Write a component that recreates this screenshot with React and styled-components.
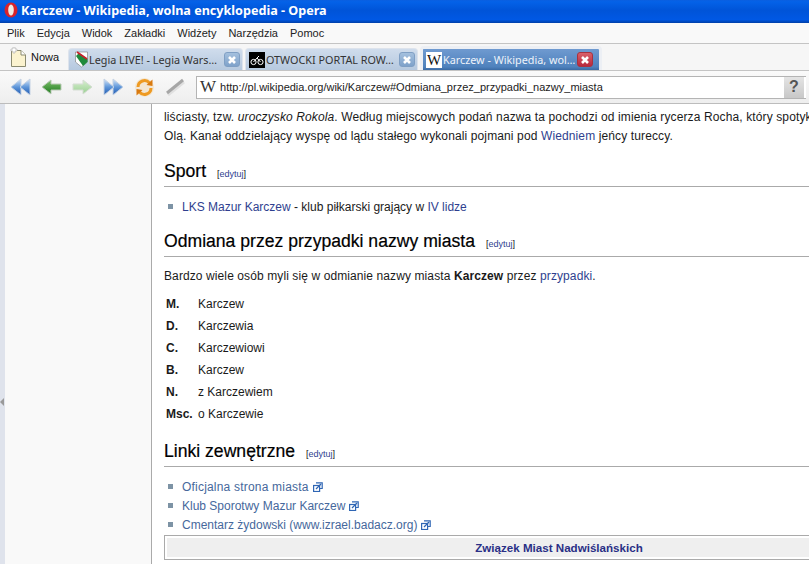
import React from 'react';
import styled, { createGlobalStyle } from 'styled-components';

const Global = createGlobalStyle`
  html, body { margin: 0; padding: 0; background: #fff; }
  * { box-sizing: border-box; }
`;

const Window = styled.div`
  width: 809px;
  height: 564px;
  overflow: hidden;
  display: flex;
  flex-direction: column;
  font-family: "Liberation Sans", Arial, sans-serif;
`;

const TitleBar = styled.div`
  height: 23px;
  flex: none;
  display: flex;
  align-items: center;
  gap: 3px;
  padding: 0 0 3px 4px;
  color: #fff;
  font: bold 12.6px "Noto Sans", sans-serif;
  background: linear-gradient(#0a5fe0 0, #0462e8 8%, #0054d8 45%, #0058e4 85%, #003fa8 100%);
`;

const MenuBar = styled.div`
  height: 21px;
  flex: none;
  display: flex;
  align-items: center;
  gap: 12px;
  padding-left: 7px;
  font: 11px "Liberation Sans", sans-serif;
  color: #222;
  background: #f9f9f9;
  border-bottom: 1px solid #c4c4c4;
`;

const TabStrip = styled.div`
  height: 27px;
  flex: none;
  display: flex;
  align-items: flex-end;
  background: #f6f6f6;
  border-bottom: 1px solid #c4c4c4;
`;

const NewTab = styled.div`
  width: 68px;
  height: 100%;
  display: flex;
  align-items: center;
  gap: 4px;
  padding-left: 10px;
  font: 11px "Liberation Sans", sans-serif;
  color: #111;
`;

const Tab = styled.div`
  width: ${p => p.$width}px;
  height: ${p => (p.$active ? 24 : 22)}px;
  margin-right: 2px;
  display: flex;
  align-items: center;
  gap: 1px;
  padding: 0 ${p => (p.$active ? 6 : 2)}px 0 3px;
  border: ${p => (p.$active ? '3px solid #eceff4' : '1px solid #dde3ec')};
  border-bottom: none;
  border-radius: 4px 4px 0 0;
  font: 10.8px "Noto Sans", sans-serif;
  white-space: nowrap;
  overflow: hidden;
  color: ${p => (p.$active ? '#eef3fa' : '#333')};
  background: ${p => (p.$active
    ? 'linear-gradient(#6f9ad0, #4f82bd 85%, #3a6aa4)'
    : 'linear-gradient(#cfdcec, #b6c9df)')};
`;

const TabLabel = styled.span`
  flex: 1;
  overflow: hidden;
`;

const CloseBox = styled.div`
  width: 16px;
  height: 15px;
  flex: none;
  display: flex;
  align-items: center;
  justify-content: center;
  border-radius: 3px;
  background: ${p => (p.$active
    ? 'linear-gradient(#d8606a, #b8283c)'
    : 'linear-gradient(#a4c0de, #7fa2ca)')};
  border: 1px solid ${p => (p.$active ? '#a83240' : '#7f9fc4')};
`;

const Toolbar = styled.div`
  height: 33px;
  flex: none;
  display: flex;
  align-items: center;
  padding: 0 3px 0 10px;
  background: linear-gradient(#fafafa, #eeeeee);
  border-bottom: 1px solid #bcbcbc;
`;

const NavIcons = styled.div`
  width: 186px;
  flex: none;
  display: flex;
  align-items: center;
  gap: 10px;
`;

const Address = styled.div`
  flex: 1;
  height: 23px;
  display: flex;
  align-items: center;
  gap: 4px;
  padding-left: 3px;
  background: #fff;
  border: 1px solid #b4b4b4;
  border-right: none;
  font: 11px "Liberation Sans", sans-serif;
  color: #222;
  white-space: nowrap;
`;

const AddressText = styled.span`
  flex: 1;
`;

const SiteGlyph = styled.span`
  font: 17px "Liberation Serif", serif;
  color: #333;
`;

const Help = styled.div`
  width: 20px;
  height: 21px;
  margin-right: 2px;
  display: flex;
  align-items: center;
  justify-content: center;
  background: linear-gradient(#e4e4e4, #c8c8c8);
  color: #555;
  font: bold 16px "Liberation Sans", sans-serif;
`;

const Body = styled.div`
  flex: 1;
  min-height: 0;
  display: flex;
`;

const Edge = styled.div`
  width: 5px;
  flex: none;
  display: flex;
  align-items: center;
  padding-top: 135px;
  background: #dfe3ec;
`;

const Pointer = styled.div`
  width: 0;
  height: 0;
  border-style: solid;
  border-width: 4px 4px 4px 0;
  border-color: transparent #9a9a9a transparent transparent;
`;

const Sidebar = styled.div`
  width: 147px;
  flex: none;
  background: #f9f9f9;
  border-right: 1px solid #aaa;
`;

const Viewport = styled.div`
  flex: 1;
  min-width: 0;
  overflow: hidden;
  background: #fff;
`;

const Article = styled.div`
  width: 790px;
  margin: -15px 0 0 12px;
  font-size: 12px;
  color: #1a1a1a;
`;

const Lead = styled.p`
  margin: 0;
  line-height: 19px;
  letter-spacing: 0.12px;
  white-space: nowrap;
`;

const A = styled.span`
  color: #2f3f8f;
`;

const Heading = styled.h2`
  margin: ${p => p.$top}px 0 0;
  height: 26px;
  display: flex;
  align-items: baseline;
  border-bottom: 1px solid #aaa;
  font-size: 17.6px;
  font-weight: normal;
  color: #000;
  -webkit-text-stroke: 0.2px #000;
`;

const Edit = styled.span`
  margin-left: 11px;
  font-size: 9px;
  color: #111;
  -webkit-text-stroke: 0;
`;

const List = styled.ul`
  margin: ${p => p.$top}px 0 0;
  padding: 0;
  list-style: none;
`;

const Item = styled.li`
  height: 19px;
  display: flex;
  align-items: center;
  gap: 4px;
  padding-left: 4px;
`;

const Bullet = styled.span`
  width: 5px;
  height: 5px;
  margin-right: 5px;
  background: #7d93a5;
`;

const Ext = styled.span`
  color: #46689c;
  letter-spacing: ${p => p.$track || 0}px;
`;

const Para = styled.p`
  margin: 10px 0 0;
  line-height: 19px;
  letter-spacing: 0.1px;
`;

const Cases = styled.div`
  margin: 7px 0 0 2px;
  display: grid;
  grid-template-columns: 32px 1fr;
  grid-auto-rows: 22px;
  align-items: center;
`;

const Navbox = styled.div`
  margin-top: 1px;
  padding: 2px;
  border: 1px solid #aaa;
  background: #fff;
`;

const NavTitle = styled.div`
  height: 19px;
  line-height: 19px;
  text-align: center;
  font-size: 11.6px;
  font-weight: bold;
  color: #2a2f86;
  background: #efefef;
`;

const Arrow = ({ id, dir = 'left', top = '#7cc06a', bottom = '#1f7a1f', edge = '#b9c9b5' }) => (
  <svg width="21" height="18" viewBox="0 0 21 18">
    <defs>
      <linearGradient id={id} x1="0" y1="0" x2="0" y2="1">
        <stop offset="0" stopColor={top} />
        <stop offset="1" stopColor={bottom} />
      </linearGradient>
    </defs>
    <g transform={dir === 'right' ? 'matrix(-1 0 0 1 21 0)' : undefined}>
      <path d="M1 9 L10 2 V6 H20 V12 H10 V16 Z" fill={`url(#${id})`} stroke={edge} strokeWidth="1" />
    </g>
  </svg>
);

const DoubleArrow = ({ id, dir = 'left' }) => (
  <svg width="21" height="20" viewBox="0 0 21 20">
    <defs>
      <linearGradient id={id} x1="0" y1="0" x2="0" y2="1">
        <stop offset="0" stopColor="#d6e6f8" />
        <stop offset="0.5" stopColor="#5f97da" />
        <stop offset="1" stopColor="#1f58b0" />
      </linearGradient>
    </defs>
    <g transform={dir === 'right' ? 'matrix(-1 0 0 1 21 0)' : undefined}>
      <path d="M1 10 L11 2 V18 Z" fill={`url(#${id})`} stroke="#c4d2e4" />
      <path d="M10 10 L20 2 V18 Z" fill={`url(#${id})`} stroke="#c4d2e4" />
    </g>
  </svg>
);

const Reload = () => (
  <svg width="21" height="21" viewBox="0 0 21 21" fill="none">
    <circle cx="10.5" cy="10.5" r="9.5" fill="#f3e6d2" />
    <path d="M4 10 A6.5 6.5 0 0 1 15.5 6" stroke="#ee9a22" strokeWidth="3" />
    <path d="M17 11 A6.5 6.5 0 0 1 5.5 15" stroke="#ee9a22" strokeWidth="3" />
    <path d="M12.5 8 L18.5 9 L18.5 2.5 Z" fill="#d97a10" />
    <path d="M8.5 13 L2.5 12 L2.5 18.5 Z" fill="#d97a10" />
  </svg>
);

const Wand = () => (
  <svg width="20" height="18" viewBox="0 0 20 18">
    <path d="M3 17 L19 4" stroke="#e0e0e0" strokeWidth="3" />
    <path d="M2 15 L18 2" stroke="#a6a6a6" strokeWidth="3" />
  </svg>
);

const NotePage = () => (
  <svg width="17" height="21" viewBox="0 0 17 21">
    <path d="M1.5 3.5 H11 L15.5 8 V19.5 H1.5 Z" fill="#fbf3cf" stroke="#8a8a70" />
    <path d="M11 3.5 V8 H15.5" fill="#fff" stroke="#8a8a70" />
    <path d="M3 0 H5 V2 H7 V4 H5 V6 H3 V4 H1 V2 H3 Z" fill="#fff" stroke="#aaa" strokeWidth="0.6" />
  </svg>
);

const OperaLogo = () => (
  <svg width="14" height="16" viewBox="0 0 14 16">
    <ellipse cx="7" cy="8" rx="6.5" ry="7.5" fill="#d8232a" />
    <ellipse cx="7" cy="8" rx="2.8" ry="5.5" fill="#f0ece4" />
  </svg>
);

const FavSlot = styled.span`
  flex: none;
  display: flex;
  margin-left: ${p => p.$left || 0}px;
`;

const LegiaIcon = () => (
  <svg width="13" height="17" viewBox="0 0 13 17">
    <path d="M0.5 1 H12.5 V11 L6.5 16 L0.5 11 Z" fill="#fff" stroke="#777" strokeWidth="0.6" />
    <path d="M1 5 L8 15 L12.5 11 L12.5 8 L4 2 Z" fill="#1f8a3c" />
    <path d="M2 1 L12 8" stroke="#c8202a" strokeWidth="1.6" />
  </svg>
);

const BikeIcon = () => (
  <svg width="16" height="16" viewBox="0 0 16 16">
    <rect width="16" height="16" fill="#000" />
    <circle cx="4.5" cy="10" r="2.6" fill="none" stroke="#fff" />
    <circle cx="11.5" cy="10" r="2.6" fill="none" stroke="#fff" />
    <path d="M4.5 10 L8 6 L11.5 10 M8 6 L10 4" stroke="#fff" fill="none" />
  </svg>
);

const WikiTile = styled.span`
  width: 16px;
  height: 16px;
  flex: none;
  background: #fff;
  color: #111;
  text-align: center;
  font: 15px/16px "Liberation Serif", serif;
`;

const CloseX = () => (
  <svg width="10" height="10" viewBox="0 0 10 10">
    <path d="M2 2 L8 8 M8 2 L2 8" stroke="#fff" strokeWidth="2.6" />
  </svg>
);

const ExtIcon = () => (
  <svg width="10" height="10" viewBox="0 0 10 10" fill="none" stroke="#2f66b4" strokeWidth="1.2">
    <rect x="0.6" y="3.5" width="6" height="6" fill="#fff" />
    <path d="M3 0.8 H9.2 V6.5 H7" />
    <path d="M3 7 L8 2" />
  </svg>
);

const App = () => (
  <Window>
    <Global />
    <TitleBar><OperaLogo />Karczew - Wikipedia, wolna encyklopedia - Opera</TitleBar>
    <MenuBar>
      {['Plik', 'Edycja', 'Widok', 'Zakładki', 'Widżety', 'Narzędzia', 'Pomoc'].map(m => <span key={m}>{m}</span>)}
    </MenuBar>
    <TabStrip>
      <NewTab><NotePage />Nowa</NewTab>
      <Tab $width={175}><FavSlot $left={3}><LegiaIcon /></FavSlot><TabLabel>Legia LIVE! - Legia Wars…</TabLabel><CloseBox><CloseX /></CloseBox></Tab>
      <Tab $width={173}><FavSlot><BikeIcon /></FavSlot><TabLabel>OTWOCKI PORTAL ROW…</TabLabel><CloseBox><CloseX /></CloseBox></Tab>
      <Tab $width={182} $active><WikiTile>W</WikiTile><TabLabel>Karczew - Wikipedia, wol…</TabLabel><CloseBox $active><CloseX /></CloseBox></Tab>
    </TabStrip>
    <Toolbar>
      <NavIcons>
        <DoubleArrow id="rewind" />
        <Arrow id="back" />
        <Arrow id="forward" dir="right" top="#d8efd0" bottom="#98cf90" edge="#d5ddd3" />
        <DoubleArrow id="fastforward" dir="right" />
        <Reload />
        <Wand />
      </NavIcons>
      <Address>
        <SiteGlyph>W</SiteGlyph>
        <AddressText>http://pl.wikipedia.org/wiki/Karczew#Odmiana_przez_przypadki_nazwy_miasta</AddressText>
        <Help>?</Help>
      </Address>
    </Toolbar>
    <Body>
      <Edge><Pointer /></Edge>
      <Sidebar />
      <Viewport>
        <Article>
          <Lead>&nbsp;</Lead>
          <Lead>liściasty, tzw. <em>uroczysko Rokola</em>. Według miejscowych podań nazwa ta pochodzi od imienia rycerza Rocha, który spotykał</Lead>
          <Lead>Olą. Kanał oddzielający wyspę od lądu stałego wykonali pojmani pod <A>Wiedniem</A> jeńcy tureccy.</Lead>
          <Heading $top={15}>Sport<Edit>[<A>edytuj</A>]</Edit></Heading>
          <List $top={10}>
            <Item><Bullet /><span><A>LKS Mazur Karczew</A> - klub piłkarski grający w <A>IV lidze</A></span></Item>
          </List>
          <Heading $top={15}>Odmiana przez przypadki nazwy miasta<Edit>[<A>edytuj</A>]</Edit></Heading>
          <Para>Bardzo wiele osób myli się w odmianie nazwy miasta <b>Karczew</b> przez <A>przypadki</A>.</Para>
          <Cases>
            <b>M.</b><span>Karczew</span>
            <b>D.</b><span>Karczewia</span>
            <b>C.</b><span>Karczewiowi</span>
            <b>B.</b><span>Karczew</span>
            <b>N.</b><span>z Karczewiem</span>
            <b>Msc.</b><span>o Karczewie</span>
          </Cases>
          <Heading $top={16}>Linki zewnętrzne<Edit>[<A>edytuj</A>]</Edit></Heading>
          <List $top={10}>
            <Item><Bullet /><Ext $track={0.2}>Oficjalna strona miasta</Ext><ExtIcon /></Item>
            <Item><Bullet /><Ext>Klub Sporotwy Mazur Karczew</Ext><ExtIcon /></Item>
            <Item><Bullet /><Ext>Cmentarz żydowski (www.izrael.badacz.org)</Ext><ExtIcon /></Item>
          </List>
          <Navbox><NavTitle>Związek Miast Nadwiślańskich</NavTitle></Navbox>
        </Article>
      </Viewport>
    </Body>
  </Window>
);

export default App;
